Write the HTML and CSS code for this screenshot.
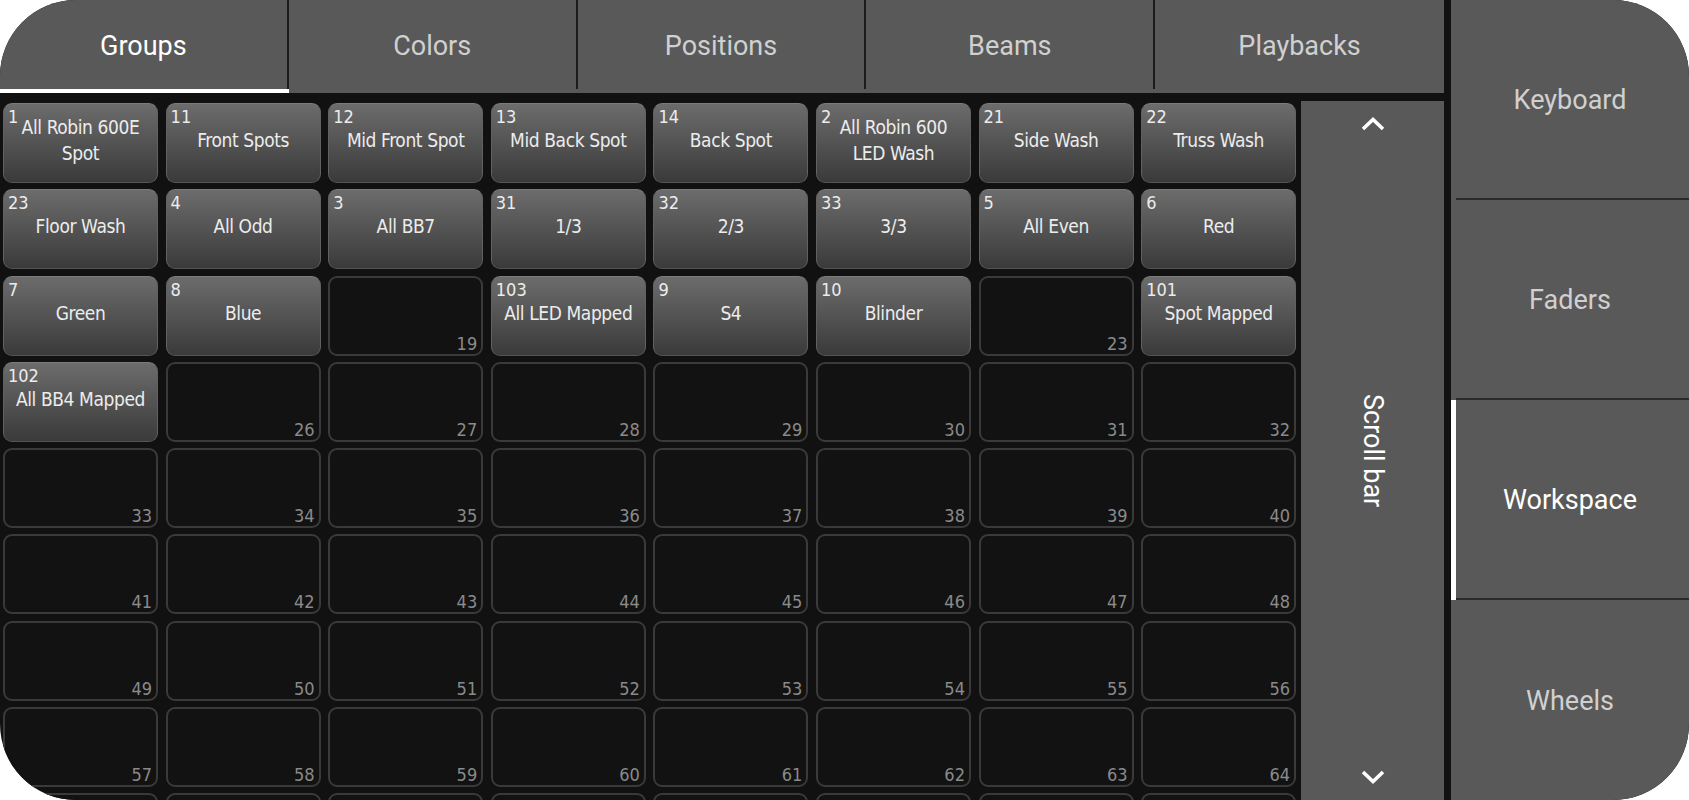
FILE: index.html
```html
<!DOCTYPE html>
<html>
<head>
<meta charset="utf-8">
<link rel="stylesheet" href="styles.css">
</head>
<body>
<div class="app">
  <div class="main">
    <div class="tabs">
      <div class="tab active"><div class="tab-label">Groups</div><div class="tab-line"></div></div>
      <div class="tab"><div class="tab-label">Colors</div><div class="tab-line"></div></div>
      <div class="tab"><div class="tab-label">Positions</div><div class="tab-line"></div></div>
      <div class="tab"><div class="tab-label">Beams</div><div class="tab-line"></div></div>
      <div class="tab last"><div class="tab-label">Playbacks</div><div class="tab-line"></div></div>
    </div>
    <div class="content">
      <div class="grid-wrap">
        <div class="grid">
          <div class="cell filled"><span class="num">1</span><span class="label">All Robin 600E<br>Spot</span></div>
          <div class="cell filled"><span class="num">11</span><span class="label">Front Spots</span></div>
          <div class="cell filled"><span class="num">12</span><span class="label">Mid Front Spot</span></div>
          <div class="cell filled"><span class="num">13</span><span class="label">Mid Back Spot</span></div>
          <div class="cell filled"><span class="num">14</span><span class="label">Back Spot</span></div>
          <div class="cell filled"><span class="num">2</span><span class="label">All Robin 600<br>LED Wash</span></div>
          <div class="cell filled"><span class="num">21</span><span class="label">Side Wash</span></div>
          <div class="cell filled"><span class="num">22</span><span class="label">Truss Wash</span></div>

          <div class="cell filled"><span class="num">23</span><span class="label">Floor Wash</span></div>
          <div class="cell filled"><span class="num">4</span><span class="label">All Odd</span></div>
          <div class="cell filled"><span class="num">3</span><span class="label">All BB7</span></div>
          <div class="cell filled"><span class="num">31</span><span class="label">1/3</span></div>
          <div class="cell filled"><span class="num">32</span><span class="label">2/3</span></div>
          <div class="cell filled"><span class="num">33</span><span class="label">3/3</span></div>
          <div class="cell filled"><span class="num">5</span><span class="label">All Even</span></div>
          <div class="cell filled"><span class="num">6</span><span class="label">Red</span></div>

          <div class="cell filled"><span class="num">7</span><span class="label">Green</span></div>
          <div class="cell filled"><span class="num">8</span><span class="label">Blue</span></div>
          <div class="cell empty"><span class="num">19</span></div>
          <div class="cell filled"><span class="num">103</span><span class="label">All LED Mapped</span></div>
          <div class="cell filled"><span class="num">9</span><span class="label">S4</span></div>
          <div class="cell filled"><span class="num">10</span><span class="label">Blinder</span></div>
          <div class="cell empty"><span class="num">23</span></div>
          <div class="cell filled"><span class="num">101</span><span class="label">Spot Mapped</span></div>

          <div class="cell filled"><span class="num">102</span><span class="label">All BB4 Mapped</span></div>
          <div class="cell empty"><span class="num">26</span></div>
          <div class="cell empty"><span class="num">27</span></div>
          <div class="cell empty"><span class="num">28</span></div>
          <div class="cell empty"><span class="num">29</span></div>
          <div class="cell empty"><span class="num">30</span></div>
          <div class="cell empty"><span class="num">31</span></div>
          <div class="cell empty"><span class="num">32</span></div>

          <div class="cell empty"><span class="num">33</span></div>
          <div class="cell empty"><span class="num">34</span></div>
          <div class="cell empty"><span class="num">35</span></div>
          <div class="cell empty"><span class="num">36</span></div>
          <div class="cell empty"><span class="num">37</span></div>
          <div class="cell empty"><span class="num">38</span></div>
          <div class="cell empty"><span class="num">39</span></div>
          <div class="cell empty"><span class="num">40</span></div>

          <div class="cell empty"><span class="num">41</span></div>
          <div class="cell empty"><span class="num">42</span></div>
          <div class="cell empty"><span class="num">43</span></div>
          <div class="cell empty"><span class="num">44</span></div>
          <div class="cell empty"><span class="num">45</span></div>
          <div class="cell empty"><span class="num">46</span></div>
          <div class="cell empty"><span class="num">47</span></div>
          <div class="cell empty"><span class="num">48</span></div>

          <div class="cell empty"><span class="num">49</span></div>
          <div class="cell empty"><span class="num">50</span></div>
          <div class="cell empty"><span class="num">51</span></div>
          <div class="cell empty"><span class="num">52</span></div>
          <div class="cell empty"><span class="num">53</span></div>
          <div class="cell empty"><span class="num">54</span></div>
          <div class="cell empty"><span class="num">55</span></div>
          <div class="cell empty"><span class="num">56</span></div>

          <div class="cell empty"><span class="num">57</span></div>
          <div class="cell empty"><span class="num">58</span></div>
          <div class="cell empty"><span class="num">59</span></div>
          <div class="cell empty"><span class="num">60</span></div>
          <div class="cell empty"><span class="num">61</span></div>
          <div class="cell empty"><span class="num">62</span></div>
          <div class="cell empty"><span class="num">63</span></div>
          <div class="cell empty"><span class="num">64</span></div>

          <div class="cell empty"></div>
          <div class="cell empty"></div>
          <div class="cell empty"></div>
          <div class="cell empty"></div>
          <div class="cell empty"></div>
          <div class="cell empty"></div>
          <div class="cell empty"></div>
          <div class="cell empty"></div>
        </div>
      </div>
      <div class="scroll">
        <svg class="chev" width="24" height="15" viewBox="0 0 24 15"><polyline points="2,13 12,3.5 22,13" fill="none" stroke="#fff" stroke-width="3.6"/></svg>
        <div class="scroll-label">Scroll bar</div>
        <svg class="chev" width="24" height="15" viewBox="0 0 24 15"><polyline points="2,2 12,11.5 22,2" fill="none" stroke="#fff" stroke-width="3.6"/></svg>
      </div>
    </div>
  </div>
  <div class="side">
    <div class="side-btn"><div class="ind"></div><div class="side-label">Keyboard</div></div>
    <div class="side-btn"><div class="ind"></div><div class="side-label">Faders</div></div>
    <div class="side-btn active"><div class="ind"></div><div class="side-label">Workspace</div></div>
    <div class="side-btn last"><div class="ind"></div><div class="side-label">Wheels</div></div>
  </div>
</div>
</body>
</html>
```
FILE: styles.css
```css
* { box-sizing: border-box; }
html, body { margin: 0; padding: 0; background: #ffffff; }
.app {
  width: 1689px;
  height: 800px;
  display: flex;
  gap: 7px;
  background: #111111;
  border-radius: 76px;
  overflow: hidden;
}
.main {
  width: 1444px;
  display: flex;
  flex-direction: column;
}
.tabs {
  height: 93px;
  display: flex;
  background: #595959;
  flex-shrink: 0;
}
.tab {
  flex: 1;
  display: flex;
  flex-direction: column;
}
.tab-label {
  flex: 1;
  display: flex;
  align-items: center;
  justify-content: center;
  border-right: 2px solid #1c1c1c;
  font-family: Roboto, "Liberation Sans", sans-serif;
  font-size: 27px;
  color: #d0d0d0;
  padding-top: 2px;
}
.tab.last .tab-label { border-right: none; }
.tab-line { height: 4px; }
.tab.active .tab-label { color: #ffffff; }
.tab.active .tab-line { background: #ffffff; }

.content {
  flex: 1;
  display: flex;
  min-height: 0;
}
.grid-wrap {
  flex: 1;
  overflow: hidden;
  padding: 10px 0 0 3px;
}
.grid {
  display: grid;
  grid-template-columns: repeat(8, 155px);
  grid-auto-rows: 80px;
  column-gap: 7.6px;
  row-gap: 6.3px;
}
.cell {
  display: grid;
  border-radius: 9px;
  font-family: "DejaVu Sans Condensed", "DejaVu Sans", sans-serif;
}
.cell .num, .cell .label { grid-area: 1 / 1; }
.cell.filled {
  background: linear-gradient(#6c6c6c, #3a3a3a);
  border: 1.5px solid #616161;
  border-top-color: #7c7c7c;
  border-bottom-color: #545454;
}
.cell.filled .num {
  align-self: start;
  justify-self: start;
  margin: 3px 0 0 4px;
  font-size: 18px;
  line-height: 20px;
  color: #ececec;
}
.cell.filled .label {
  align-self: center;
  justify-self: center;
  margin-bottom: 6px;
  text-align: center;
  white-space: nowrap;
  font-size: 19px;
  letter-spacing: -0.4px;
  line-height: 26px;
  color: #ececec;
}
.cell.empty {
  background: #121212;
  border: 2px solid #3a3a3a;
}
.cell.empty .num {
  align-self: end;
  justify-self: end;
  margin: 0 4px 0 0;
  font-size: 18px;
  line-height: 20px;
  color: #8a8a8a;
}

.scroll {
  width: 143px;
  flex-shrink: 0;
  margin-top: 8px;
  background: #595959;
  display: flex;
  flex-direction: column;
  align-items: center;
  justify-content: space-between;
  padding: 15px 0 15px;
}
.chev { display: block; }
.scroll-label {
  writing-mode: vertical-rl;
  font-family: Roboto, "Liberation Sans", sans-serif;
  font-size: 27px;
  color: #ffffff;
}

.side {
  flex: 1;
  display: flex;
  flex-direction: column;
  background: #595959;
}
.side-btn {
  height: 200px;
  display: flex;
}
.ind { width: 5px; flex-shrink: 0; }
.side-btn.active .ind { background: #ffffff; }
.side-label {
  flex: 1;
  display: flex;
  align-items: center;
  justify-content: center;
  border-bottom: 2px solid #2a2a2a;
  font-family: Roboto, "Liberation Sans", sans-serif;
  font-size: 27px;
  color: #d0d0d0;
  padding-right: 5px;
  padding-top: 2px;
}
.side-btn.last .side-label { border-bottom: none; }
.side-btn.active .side-label { color: #ffffff; }
```
